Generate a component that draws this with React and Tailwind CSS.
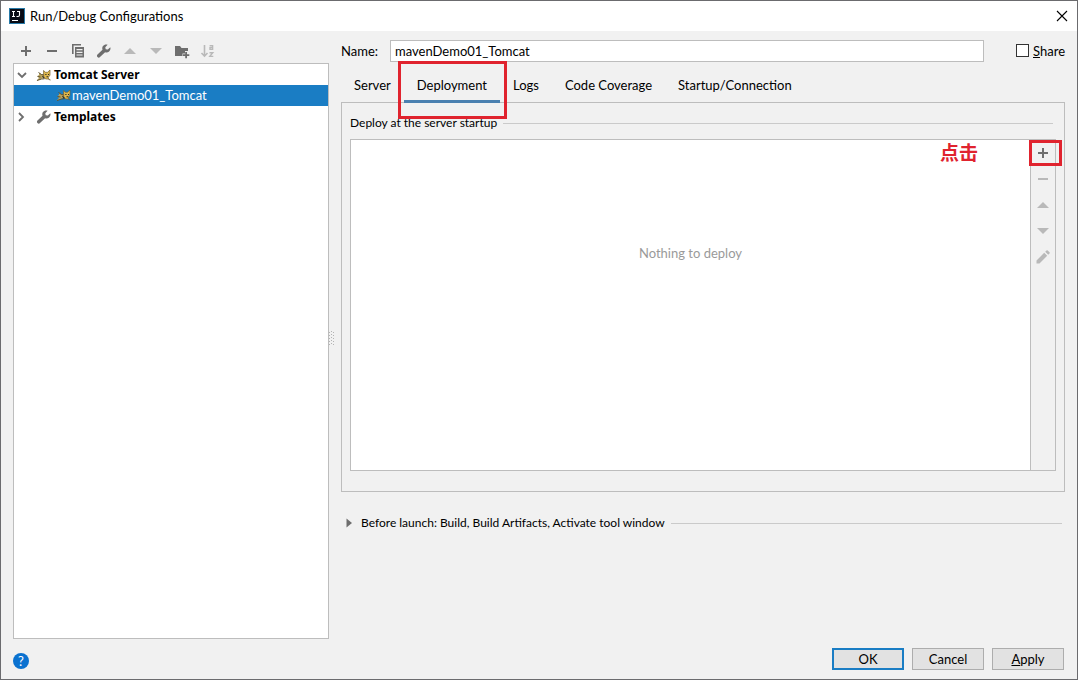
import { useState } from "react";

function PlusIcon() {
  return (
    <svg viewBox="0 0 16 16" className="size-4" fill="none" stroke="currentColor" strokeWidth="2">
      <path d="M8 3v10M3 8h10" />
    </svg>
  );
}

function MinusIcon() {
  return (
    <svg viewBox="0 0 16 16" className="size-4" fill="none" stroke="currentColor" strokeWidth="2">
      <path d="M3 8h10" />
    </svg>
  );
}

function CopyIcon() {
  return (
    <svg viewBox="0 0 16 16" className="size-4" fill="currentColor">
      <path d="M2 1h9v1.6H3.6V11H2z" />
      <path fillRule="evenodd" d="M5 4h9v10.5H5zM6.500 6v1.200h6V6zM6.500 8.700v1.200h6V8.700zM6.500 11.400v1.200h6v-1.200z" />
    </svg>
  );
}

function WrenchIcon() {
  return (
    <svg viewBox="0 0 16 16" className="size-4" fill="currentColor">
      <path d="M14.300 4.300 11.800 6.600 9.700 6.300 9.300 4.200 11.600 1.700C9.900 1.100 8 1.600 7 3 6.200 4.100 6.100 5.500 6.500 6.700L1.500 11.600c-.7.700-.7 1.800 0 2.500s1.800.7 2.500 0L9.100 9.200c1.300.5 2.900.3 4-.7 1.200-1.100 1.700-2.700 1.200-4.200z" />
    </svg>
  );
}

function UpIcon() {
  return (
    <svg viewBox="0 0 16 16" className="size-4" fill="currentColor">
      <path d="M2 11 8 5l6 6z" />
    </svg>
  );
}

function DownIcon() {
  return (
    <svg viewBox="0 0 16 16" className="size-4" fill="currentColor">
      <path d="M2 5h12l-6 6z" />
    </svg>
  );
}

function FolderPlusIcon() {
  return (
    <svg viewBox="0 0 16 16" className="size-4" fill="currentColor">
      <path d="M1 3h5l1.500 2H14v3h-3v2.500H8.500V13H1z" />
      <path d="M11.200 9h1.800v2.200h2.300V13H13v2.300h-1.800V13H9v-1.800h2.200z" />
    </svg>
  );
}

function SortIcon() {
  return (
    <svg viewBox="0 0 16 16" className="size-4" fill="none" stroke="currentColor" strokeWidth="1.4">
      <path d="M4.500 2v11M1.500 10l3 3.200 3-3.200" strokeWidth="1.600" />
      <path d="M9.600 2.700h3v4.200M12.600 4.600H10v1.800h2.600M9.500 9.700h3.300L9.800 13.400h3.500" />
    </svg>
  );
}

function PencilIcon() {
  return (
    <svg viewBox="0 0 16 16" className="size-4" fill="currentColor">
      <path d="M1.500 14.500v-3l7.700-7.700 3 3-7.700 7.700zM10.200 2.800l1.300-1.300q.6-.5 1.200 0l1.800 1.800q.5.600 0 1.200l-1.300 1.300z" />
    </svg>
  );
}

function TomcatIcon() {
  return (
    <svg viewBox="0 0 16 16" className="h-4 w-4" fill="none">
      <path d="M3 6l3 1.500 3 .5-2 3-4 2-2.500.5L3 11 1.500 9 3 8z" fill="#b9a25c" />
      <path d="M2.500 5.500l3 2 3 .5M1.500 9.500l3 .5M1 13.500l4.500-1.500 3-.2" stroke="#5d5230" />
      <path d="M7.500 3.500l2 1.800h2L14 3v5.500l-1.800 1.700.6 1.800H9.500l-1.800-2.500z" fill="#dfb84d" stroke="#766231" strokeWidth=".7" />
      <path d="M9.300 7.500h1.200M12 7.500h1M10.500 9.700h1.700M6.500 9l1.800 2.500" stroke="#2d2b22" strokeWidth="1.100" />
      <path d="M12.500 12.300l2 .7" stroke="#766231" />
    </svg>
  );
}

function IdeaLogo() {
  return (
    <svg viewBox="0 0 16 16" className="size-4">
      <path d="M0 0h16v16H0z" fill="#287aa8" />
      <path d="M1 1h14v14H1z" fill="#090b14" />
      <path d="M3 3.500h3M4.500 3.500v5M3 8.500h3M8 3.500h2.500V7q0 1.500-1.500 1.500H7.500M3 12.500h6" fill="none" stroke="#fff" strokeWidth="1.100" />
    </svg>
  );
}

function Chevron({ open }) {
  return (
    <svg viewBox="0 0 16 16" className="size-4" fill="none" stroke="#6e6e6e" strokeWidth="1.800">
      <path d={open ? "M4 6l4 4 4-4" : "M5 4l4 4-4 4"} />
    </svg>
  );
}

function Grip() {
  return (
    <svg viewBox="0 0 6 18" className="h-[18px] w-[6px]" fill="#b4b4b4">
      {[1, 4, 7, 10, 13].map((y) => (
        <g key={y}>
          <path d={`M0 ${y + 1}h1v1H0z`} />
          <path d={`M2 ${y}h1v1H2z`} />
          <path d={`M4 ${y + 1}h1v1H4z`} />
        </g>
      ))}
    </svg>
  );
}

function IconButton({ label, disabled, children }) {
  return (
    <button type="button" aria-label={label} disabled={disabled} className="size-4 text-[#6e6e6e] disabled:text-[#b9b9b9]">
      {children}
    </button>
  );
}

const tabs = ["Server", "Deployment", "Logs", "Code Coverage", "Startup/Connection"];

export default function App() {
  const [active, setActive] = useState("Deployment");
  const [name, setName] = useState("mavenDemo01_Tomcat");

  return (
    <div className="flex min-h-screen flex-col border border-[#6b6b6e] bg-[#f1f1f1] font-['Lato','Noto_Sans_CJK_SC',sans-serif] text-[12px] leading-4 text-black">
      <header className="flex h-[30px] items-center bg-white pr-[7px] pb-px pl-2">
        <IdeaLogo />
        <h1 className="ml-[5px] flex-1 text-[13px]">Run/Debug Configurations</h1>
        <button type="button" aria-label="Close" className="size-4">
          <svg viewBox="0 0 16 16" className="size-4" fill="none" stroke="#000" strokeWidth="1.100">
            <path d="M3 3l10 10M13 3 3 13" />
          </svg>
        </button>
      </header>

      <main className="flex flex-1 px-3">
        <aside className="flex w-[316px] shrink-0 flex-col">
          <div role="toolbar" aria-label="Configurations" className="flex gap-[10px] pt-3 pb-1 pl-[5px]">
            <IconButton label="Add"><PlusIcon /></IconButton>
            <IconButton label="Remove"><MinusIcon /></IconButton>
            <IconButton label="Copy"><CopyIcon /></IconButton>
            <IconButton label="Edit templates"><WrenchIcon /></IconButton>
            <IconButton label="Move up" disabled><UpIcon /></IconButton>
            <IconButton label="Move down" disabled><DownIcon /></IconButton>
            <IconButton label="New folder"><FolderPlusIcon /></IconButton>
            <IconButton label="Sort" disabled><SortIcon /></IconButton>
          </div>
          <ul role="tree" aria-label="Configurations" className="flex-1 border border-[#bdbdbd] bg-white text-[13px]">
            <li role="treeitem" aria-expanded="true" aria-selected="false">
              <div className="flex h-[21px] items-center font-bold">
                <Chevron open />
                <span className="mr-[2px] ml-[6px]"><TomcatIcon /></span>
                <span className="font-['Noto_Sans',sans-serif] text-[12px]">Tomcat Server</span>
              </div>
              <ul role="group">
                <li role="treeitem" aria-selected="true" className="flex h-[21px] items-center bg-[#1a7dc4] pb-px pl-[42px] text-white">
                  <TomcatIcon />
                  <span>mavenDemo01_Tomcat</span>
                </li>
              </ul>
            </li>
            <li role="treeitem" aria-expanded="false" aria-selected="false" className="flex h-[21px] items-center font-bold">
              <Chevron />
              <span className="mr-[2px] ml-[6px] text-[#6e6e6e]"><WrenchIcon /></span>
              <span className="font-['Noto_Sans',sans-serif] text-[12px]">Templates</span>
            </li>
          </ul>
        </aside>

        <div className="flex w-3 shrink-0 items-center pt-2">
          <Grip />
        </div>

        <section className="min-w-0 flex-1 pt-[9px]">
          <div className="flex h-[22px] items-center">
            <label htmlFor="config-name" className="w-[49px] pb-px text-[13px]">Name:</label>
            <input
              id="config-name"
              value={name}
              onChange={(e) => setName(e.target.value)}
              className="h-[22px] min-w-0 flex-1 border border-[#bdbdbd] bg-white px-1 pb-px text-[13px] outline-none"
            />
            <label className="ml-8 flex items-center gap-1 pb-px text-[13px]">
              <input type="checkbox" className="size-[13px] appearance-none border border-[#333] bg-white checked:bg-[#1a7dc4]" />
              <span><u>S</u>hare</span>
            </label>
          </div>

          <div role="tablist" className="relative z-10 mt-[9px] flex h-8">
            {tabs.map((tab) => (
              <div key={tab} className="relative">
                <button
                  type="button"
                  role="tab"
                  aria-selected={active === tab}
                  onClick={() => setActive(tab)}
                  className="h-8 border-b-[3px] border-transparent px-[13px] pb-px text-[13px] aria-selected:border-[#4a80b0]"
                >
                  {tab}
                </button>
                {tab === "Deployment" && (
                  <span className="pointer-events-none absolute -top-[10px] -right-[7px] -bottom-4 -left-[6px] border-3 border-[#e0232e]" />
                )}
              </div>
            ))}
          </div>

          <div role="tabpanel" className="-mt-px border border-[#bdbdbd] px-2 pb-5">
            <div className="flex h-9 items-center gap-[6px] pt-1 pr-[3px]">
              <h2>Deploy at the server startup</h2>
              <span className="h-px flex-1 bg-[#cacaca]" />
            </div>
            <div className="flex min-h-[332px] border border-[#bdbdbd]">
              <div className="relative flex-1 bg-white pt-[105px] text-center text-[13px] text-[#9a9a9a]">
                Nothing to deploy
                <span className="absolute top-[3px] right-[52px] text-[19px] leading-5 font-bold text-[#e0232e]">点击</span>
              </div>
              <div role="toolbar" aria-label="Artifacts" aria-orientation="vertical" className="flex w-[25px] flex-col items-center gap-[10px] border-l border-[#bdbdbd] pt-[5px]">
                <div className="relative size-4">
                  <IconButton label="Add artifact"><PlusIcon /></IconButton>
                  <span className="pointer-events-none absolute -top-[5px] -right-[11px] -bottom-[5px] -left-[6px] border-3 border-[#e0232e]" />
                </div>
                <IconButton label="Remove artifact" disabled><MinusIcon /></IconButton>
                <IconButton label="Move artifact up" disabled><UpIcon /></IconButton>
                <IconButton label="Move artifact down" disabled><DownIcon /></IconButton>
                <IconButton label="Edit artifact" disabled><PencilIcon /></IconButton>
              </div>
            </div>
          </div>

          <div className="mt-[23px] flex items-center gap-[6px] pr-[3px]">
            <button type="button" className="flex items-center gap-2 pl-1">
              <svg viewBox="0 0 8 10" className="h-[10px] w-2" fill="#6e6e6e">
                <path d="M1.500 .5l5.500 4.500-5.500 4.500z" />
              </svg>
              Before launch: Build, Build Artifacts, Activate tool window
            </button>
            <span className="h-px flex-1 bg-[#cacaca]" />
          </div>
        </section>
      </main>

      <footer className="flex items-center gap-2 py-[9px] pr-[13px] pl-3 text-[13px]">
        <button type="button" aria-label="Help" className="mt-1 mr-auto flex size-4 items-center justify-center rounded-full bg-[#0b72d0] text-[13px] leading-4 text-white">?</button>
        <button type="button" className="h-[22px] w-[72px] border-2 border-[#1a7dc4] bg-[#e2e2e2] pb-px leading-4">OK</button>
        <button type="button" className="h-[22px] w-[72px] border border-[#adadad] bg-[#e2e2e2] pb-px leading-4">Cancel</button>
        <button type="button" className="h-[22px] w-[72px] border border-[#adadad] bg-[#e2e2e2] pb-px leading-4"><u>A</u>pply</button>
      </footer>
    </div>
  );
}
